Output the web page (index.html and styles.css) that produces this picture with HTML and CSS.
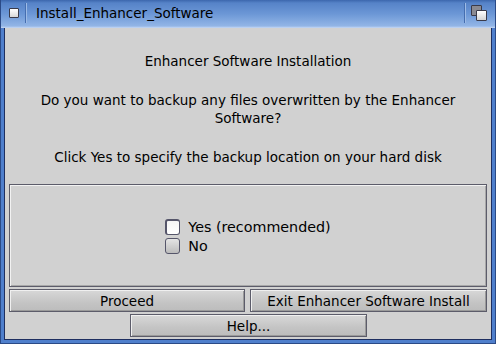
FILE: index.html
```html
<!DOCTYPE html>
<html lang="en">
<head>
  <meta charset="UTF-8" />
  <title>Install_Enhancer_Software</title>
  <link rel="stylesheet" href="styles.css">
</head>
<body>

  <div class="window">
    <div class="titlebar">
      <span class="close-box"></span>
      <span class="sep"></span>
      <span class="title">Install_Enhancer_Software</span>
      <span class="sep"></span>
      <span class="depth-box">
        <span class="back"></span>
        <span class="front"></span>
      </span>
    </div>

    <div class="content">
      <div class="message">
        <p>Enhancer Software Installation</p>
        <p>Do you want to backup any files overwritten by the Enhancer<br>Software?</p>
        <p>Click Yes to specify the backup location on your hard disk</p>
      </div>

      <div class="group">
        <div class="options">
          <label class="option"><span class="check selected"></span>Yes (recommended)</label>
          <label class="option"><span class="check"></span>No</label>
        </div>
      </div>

      <div class="button-row">
        <button>Proceed</button>
        <button>Exit Enhancer Software Install</button>
      </div>
      <div class="button-row centered">
        <button>Help...</button>
      </div>
    </div>
  </div>

</body>
</html>
```

FILE: styles.css
```css
* {
  box-sizing: border-box;
}

body {
  margin: 0;
  font-family: 'DejaVu Sans', sans-serif;
  font-size: 13.5px;
  color: #000;
  background: #d1d1d1;
}

.window {
  width: 496px;
  height: 344px;
  display: flex;
  flex-direction: column;
  background: #4f7fcc;
  border-left: 1px solid #2b4a86;
  border-right: 1px solid #2b4a86;
  border-bottom: 1px solid #2b4a86;
  padding: 0 3px 3px 3px;
}

.titlebar {
  height: 30px;
  margin: 0 -3px;
  display: flex;
  align-items: center;
  padding: 0 8px 2px 8px;
  background: linear-gradient(to bottom, #3c67ad 0px, #5683c8 3px, #6c97d6 14px, #92b5e6 26px, #c7d9f4 28px, #203a78 29px, #203a78 30px);
}

.close-box {
  width: 10px;
  height: 10px;
  border: 1px solid #3a3a48;
  border-radius: 1px;
  background: linear-gradient(to bottom, #ffffff, #d8d8d8);
}

.sep {
  width: 1px;
  height: 20px;
  margin: 0 6px;
  background: #456eb0;
  box-shadow: 1px 0 0 #9dbbe6;
}

.title {
  flex: 1;
  color: #000;
  font-size: 13.5px;
  padding-left: 4px;
}

.depth-box {
  position: relative;
  width: 16px;
  height: 16px;
}

.depth-box .back,
.depth-box .front {
  position: absolute;
  width: 11px;
  height: 11px;
  border: 1px solid #3a3a48;
  border-radius: 1px;
}

.depth-box .back {
  left: 0;
  top: 0;
  background: #8a8a92;
}

.depth-box .front {
  left: 5px;
  top: 5px;
  background: linear-gradient(to bottom, #ffffff, #d4d4d4);
}

.content {
  flex: 1;
  background: #d1d1d1;
  border: 1px solid #1e2f60;
  border-top: none;
  padding: 24px 4px 2px 4px;
  display: flex;
  flex-direction: column;
}

.message {
  text-align: center;
  line-height: 18px;
}

.message p {
  margin: 0 0 21px 0;
}

.message p:last-child {
  margin-bottom: 18px;
}

.group {
  height: 103px;
  border: 1px solid #5c5c6a;
  box-shadow: inset 1px 1px 0 #f2f2f2, inset -1px -1px 0 #a8a8a8;
  display: flex;
  justify-content: center;
  align-items: center;
}

.options {
  display: flex;
  flex-direction: column;
  gap: 3px;
  padding-top: 1px;
}

.option {
  display: flex;
  align-items: center;
  gap: 8px;
  font-size: 14.3px;
  line-height: 16px;
}

.check {
  width: 15px;
  height: 16px;
  border: 1px solid #55556a;
  border-radius: 3px;
  background: linear-gradient(to bottom, #e4e4e4, #bcbcbc);
}

.check.selected {
  border-top-width: 2px;
  border-left-width: 2px;
  background: linear-gradient(to bottom, #f4f4f4, #ffffff);
}

.button-row {
  display: flex;
  gap: 5px;
  margin-top: 2px;
}

.button-row.centered {
  justify-content: center;
  padding-left: 1px;
  margin-top: 2px;
}

button {
  font-family: 'DejaVu Sans', sans-serif;
  font-size: 13.5px;
  color: #000;
  width: 237px;
  height: 23px;
  padding: 0;
  border: 1px solid #5c5c6a;
  box-shadow: inset 1px 1px 0 #f0f0f0, inset -1px -1px 0 #9a9a9a;
  background: linear-gradient(to bottom, #d8d8d8, #c4c4c4 60%, #bcbcbc);
}

.button-row button:nth-child(2) {
  width: 238px;
}
```
